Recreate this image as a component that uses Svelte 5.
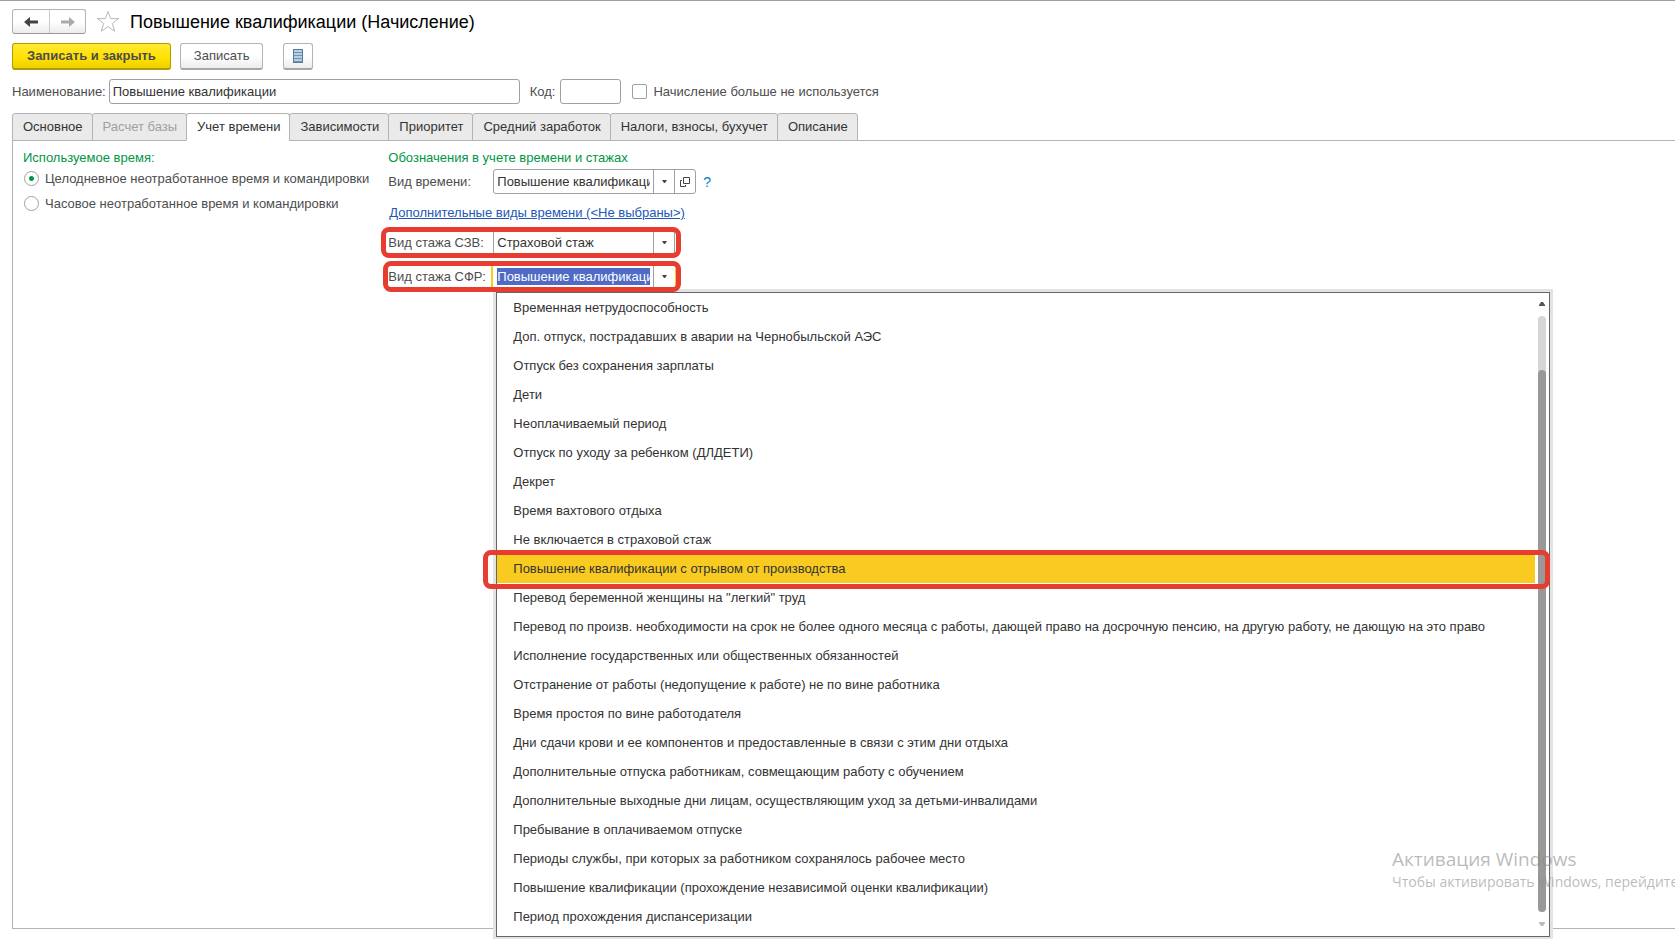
<script lang="ts">
	const tabs = [
		{ title: 'Основное' },
		{ title: 'Расчет базы', disabled: true },
		{ title: 'Учет времени' },
		{ title: 'Зависимости' },
		{ title: 'Приоритет' },
		{ title: 'Средний заработок' },
		{ title: 'Налоги, взносы, бухучет' },
		{ title: 'Описание' }
	];

	const options = [
		'Временная нетрудоспособность',
		'Доп. отпуск, пострадавших в аварии на Чернобыльской АЭС',
		'Отпуск без сохранения зарплаты',
		'Дети',
		'Неоплачиваемый период',
		'Отпуск по уходу за ребенком (ДЛДЕТИ)',
		'Декрет',
		'Время вахтового отдыха',
		'Не включается в страховой стаж',
		'Повышение квалификации с отрывом от производства',
		'Перевод беременной женщины на "легкий" труд',
		'Перевод по произв. необходимости на срок не более одного месяца с работы, дающей право на досрочную пенсию, на другую работу, не дающую на это право',
		'Исполнение государственных или общественных обязанностей',
		'Отстранение от работы (недопущение к работе) не по вине работника',
		'Время простоя по вине работодателя',
		'Дни сдачи крови и ее компонентов и предоставленные в связи с этим дни отдыха',
		'Дополнительные отпуска работникам, совмещающим работу с обучением',
		'Дополнительные выходные дни лицам, осуществляющим уход за детьми-инвалидами',
		'Пребывание в оплачиваемом отпуске',
		'Периоды службы, при которых за работником сохранялось рабочее место',
		'Повышение квалификации (прохождение независимой оценки квалификации)',
		'Период прохождения диспансеризации'
	];

	let activeTab = $state(2);
	let selected = $state(9);
	let usedTime = $state('day');
	let name = $state('Повышение квалификации');
	let code = $state('');
	let notUsed = $state(false);
	let timeKind = $state('Повышение квалификации');
	let szv = $state('Страховой стаж');
	let sfr = $state('Повышение квалификации');
</script>

{#snippet caret()}
	<svg width="5" height="3" viewBox="0 0 5 3"><path d="M0 0H5L3 3H2Z" fill="#444" /></svg>
{/snippet}

<div class="page">
	<header class="title-bar">
		<div class="history">
			<button aria-label="Назад">
				<svg width="14" height="10" viewBox="0 0 14 10"><path d="M0 5L6 0V3.6H14V6.4H6V10Z" fill="#444" /></svg>
			</button>
			<button aria-label="Вперед">
				<svg width="14" height="10" viewBox="0 0 14 10"><path d="M14 5L8 0V3.6H0V6.4H8V10Z" fill="#aaa" /></svg>
			</button>
		</div>
		<button class="star" aria-label="В избранное">
			<svg width="24" height="23" viewBox="0 0 24 23">
				<path d="M12 1.5L14.7 8.6H22.6L16.3 13.4L18.7 21.2L12 16.6L5.3 21.2L7.7 13.4L1.4 8.6H9.3Z" fill="#fff" stroke="#b4bac0" />
			</svg>
		</button>
		<h1>Повышение квалификации (Начисление)</h1>
	</header>

	<div class="commands">
		<button class="btn primary">Записать и закрыть</button>
		<button class="btn">Записать</button>
		<button class="btn icon" aria-label="Список">
			<svg width="10" height="14" viewBox="0 0 10 14">
				<rect x="0.5" y="0.5" width="9" height="13" fill="#b5cfe3" stroke="#587d9b" />
				<path d="M1 3.5H9M1 6.5H9M1 9.5H9M1 12.5H9" stroke="#6f93b0" />
			</svg>
		</button>
	</div>

	<div class="fields">
		<label for="name">Наименование:</label>
		<input id="name" class="text name" type="text" bind:value={name} />
		<label for="code">Код:</label>
		<input id="code" class="text code" type="text" bind:value={code} />
		<label class="check">
			<input type="checkbox" bind:checked={notUsed} />
			Начисление больше не используется
		</label>
	</div>

	<nav class="tabs" role="tablist">
		{#each tabs as tab, index}
			<button
				role="tab"
				class:active={index === activeTab}
				aria-selected={index === activeTab}
				disabled={tab.disabled}
				onclick={() => (activeTab = index)}
			>
				{tab.title}
			</button>
		{/each}
	</nav>

	<main class="panel">
		<section class="used-time">
			<h2>Используемое время:</h2>
			<label class="radio">
				<input type="radio" name="used" value="day" bind:group={usedTime} />
				Целодневное неотработанное время и командировки
			</label>
			<label class="radio">
				<input type="radio" name="used" value="hour" bind:group={usedTime} />
				Часовое неотработанное время и командировки
			</label>
		</section>

		<section class="marks">
			<h2>Обозначения в учете времени и стажах</h2>
			<div class="row">
				<label for="kind">Вид времени:</label>
				<div class="combo">
					<input id="kind" type="text" bind:value={timeKind} />
					<button aria-label="Выбрать">{@render caret()}</button>
					<button aria-label="Открыть">
						<svg width="10" height="10" viewBox="0 0 10 10" fill="none" stroke="#444">
							<path d="M3.5 0.5H9.5V6.5H3.5Z" />
							<path d="M2 3.5H0.5V9.5H5.5V8" />
						</svg>
					</button>
				</div>
				<button class="help" aria-label="Справка">?</button>
			</div>
			<a class="more" href="#kinds">Дополнительные виды времени (&lt;Не выбраны&gt;)</a>
			<div class="row marked szv">
				<label for="szv">Вид стажа СЗВ:</label>
				<div class="combo">
					<input id="szv" type="text" bind:value={szv} />
					<button aria-label="Выбрать">{@render caret()}</button>
				</div>
			</div>
			<div class="row marked sfr">
				<label for="sfr">Вид стажа СФР:</label>
				<div class="combo focused">
					<input id="sfr" type="text" bind:value={sfr} />
					<button aria-label="Выбрать">{@render caret()}</button>
				</div>
				<div class="dropdown">
					<ul role="listbox" aria-label="Вид стажа СФР">
						{#each options as option, index}
							<li role="option" aria-selected={index === selected} class:selected={index === selected}>
								<button onclick={() => (selected = index)}>{option}</button>
							</li>
						{/each}
					</ul>
					<div class="scroll">
						<svg width="6" height="4" viewBox="0 0 6 4"><path d="M0 4V3L2 0H4L6 3V4Z" fill="#555" /></svg>
						<div class="track"><div class="thumb"></div></div>
						<svg width="6" height="4" viewBox="0 0 6 4"><path d="M0 0H6V1L4 4H2L0 1Z" fill="#bbb" /></svg>
					</div>
				</div>
			</div>
		</section>
	</main>

	<div class="activation">
		<p class="big">Активация Windows</p>
		<p>Чтобы активировать Windows, перейдите</p>
	</div>
</div>

<style>
	:global(body) {
		background: #fff;
	}

	.page {
		position: relative;
		display: flex;
		flex-direction: column;
		box-sizing: border-box;
		min-height: 100vh;
		padding: 8px 0 10px 12px;
		border-top: 1px solid #a0a0a0;
		overflow: hidden;
		font-family: 'Liberation Sans', Arial, sans-serif;
		font-size: 13px;
		line-height: 16px;
		color: #4d4d4d;
	}

	button,
	input {
		font: inherit;
		color: inherit;
		margin: 0;
		padding: 0;
		box-sizing: border-box;
	}

	button {
		border: none;
		background: none;
	}

	h1,
	h2,
	p,
	ul {
		margin: 0;
		padding: 0;
		font-weight: normal;
	}

	svg {
		display: block;
	}

	.title-bar {
		display: flex;
		align-items: center;
		height: 25px;
	}

	.history {
		display: flex;
		box-sizing: border-box;
		height: 25px;
		border: 1px solid #b3b3b3;
		border-bottom-color: #999;
		border-radius: 3px;
		background: linear-gradient(#fff 50%, #ececec);
	}

	.history button {
		display: grid;
		place-items: center;
		width: 36px;
	}

	.history button + button {
		border-left: 1px solid #ccc;
	}

	.star {
		margin-left: 10px;
	}

	h1 {
		margin-left: 10px;
		font-size: 18px;
		line-height: 24px;
		color: #000;
	}

	.commands {
		display: flex;
		gap: 9px;
		margin-top: 9px;
	}

	.btn {
		height: 27px;
		padding: 0 13px;
		border: 1px solid #b3b3b3;
		border-bottom: 2px solid #a6a6a6;
		border-radius: 3px;
		background: linear-gradient(#fff 50%, #ececec);
	}

	.btn.primary {
		padding: 0 14px;
		border-color: #b09c00;
		background: linear-gradient(#ffe933, #ffe000 60%, #ecd000);
		font-weight: bold;
	}

	.btn.icon {
		display: grid;
		place-items: center;
		width: 30px;
		margin-left: 11px;
		padding: 0;
	}

	.fields {
		display: flex;
		align-items: center;
		margin-top: 9px;
	}

	.text {
		height: 25px;
		padding: 0 3px;
		border: 1px solid #a0a0a0;
		border-radius: 3px;
		background: #fff;
		color: #333;
	}

	.name {
		width: 411px;
		margin: 0 10px 0 3px;
	}

	.code {
		width: 61px;
		margin: 0 11px 0 5px;
	}

	.check,
	.radio {
		display: flex;
		align-items: center;
		gap: 6px;
	}

	.check input,
	.radio input {
		appearance: none;
		width: 15px;
		height: 15px;
		border: 1px solid #a0a0a0;
		border-radius: 2px;
		background: #fff;
	}

	.check input:checked {
		background: #009646;
	}

	.tabs {
		display: flex;
		margin-top: 9px;
		position: relative;
	}

	.tabs button {
		height: 28px;
		padding: 0 9px 0 10px;
		margin-right: -1px;
		border: 1px solid #b3b3b3;
		border-radius: 3px 3px 0 0;
		background: #eaeaea;
		color: #333;
	}

	.tabs button.active {
		border-bottom-color: #fff;
		background: #fff;
	}

	.tabs button:disabled {
		color: #a0a0a0;
	}

	.panel {
		display: flex;
		flex: 1;
		align-items: flex-start;
		gap: 19px;
		margin-top: -1px;
		padding: 9px 10px;
		border: 1px solid #b3b3b3;
		border-right: none;
	}

	h2 {
		font-size: 13px;
		line-height: 16px;
		color: #009646;
	}

	.used-time {
		display: flex;
		flex-direction: column;
	}

	.radio {
		height: 25px;
	}

	.radio input {
		border-radius: 50%;
		margin-left: 1px;
	}

	.radio input:checked {
		background: radial-gradient(circle, #009646 2px, #fff 3px);
	}

	.row {
		position: relative;
		display: flex;
		align-items: center;
		width: max-content;
	}

	.row label {
		width: 105px;
	}

	.marks h2 {
		margin-bottom: 3px;
	}

	.combo {
		display: flex;
		box-sizing: border-box;
		height: 25px;
		border: 1px solid #a0a0a0;
		border-radius: 3px;
		background: #fff;
		color: #333;
	}

	.combo input {
		width: 159px;
		padding: 3px;
		border: none;
		background: none;
		outline: none;
	}

	.combo button {
		display: grid;
		place-items: center;
		width: 21px;
		border-left: 1px solid #a0a0a0;
	}

	.help {
		margin-left: 7px;
		font-size: 14px;
		color: #0a7ac4;
	}

	.more {
		display: block;
		width: max-content;
		margin: 11px 0 9px 1px;
		color: #2257b8;
	}

	/* red frames drawn round the fields in question */
	.marked::after,
	.selected::after {
		content: '';
		position: absolute;
		z-index: 2;
		border: 5px solid #e73c30;
		border-radius: 8px;
		pointer-events: none;
	}

	.marked::after {
		inset: -3px -6px -3px -7px;
	}

	.sfr {
		margin-top: 9px;
	}

	.sfr::after {
		left: -5px;
	}

	.combo.focused {
		border-color: transparent;
		box-shadow: 0 0 0 2px #f9cb20;
	}

	.focused input {
		background: #4f6bc5 content-box;
		color: #fff;
	}

	.dropdown {
		position: absolute;
		top: 28px;
		left: 108px;
		z-index: 1;
		display: flex;
		padding-bottom: 5px;
		border: 1px solid #666;
		box-shadow: 0 0 0 3px #e3e3e3;
		background: #fff;
		color: #333;
	}

	.dropdown ul {
		list-style: none;
	}

	.dropdown li {
		position: relative;
		height: 29px;
	}

	.dropdown li button {
		width: 100%;
		height: 29px;
		padding: 0 50px 0 16px;
		text-align: left;
		white-space: nowrap;
	}

	.dropdown .selected {
		background: #f9cb20;
	}

	.selected::after {
		inset: -4px -15px -6px -14px;
	}

	.scroll {
		display: flex;
		flex-direction: column;
		align-items: center;
		gap: 10px;
		width: 8px;
		padding: 9px 3px 5px;
	}

	.track {
		flex: 1;
		width: 8px;
		border-radius: 4px;
		background: #d6d6d6;
		display: flex;
		align-items: flex-end;
	}

	.thumb {
		width: 8px;
		height: 91%;
		border-radius: 4px;
		background: #999;
	}

	.activation {
		position: absolute;
		right: 0;
		bottom: 47px;
		z-index: 2;
		width: 283px;
		overflow: hidden;
		white-space: nowrap;
		font-family: 'Open Sans', sans-serif;
		font-size: 14px;
		line-height: 20px;
		color: rgba(140, 140, 140, 0.6);
		pointer-events: none;
	}

	.big {
		font-size: 19px;
		line-height: 26px;
	}
</style>
